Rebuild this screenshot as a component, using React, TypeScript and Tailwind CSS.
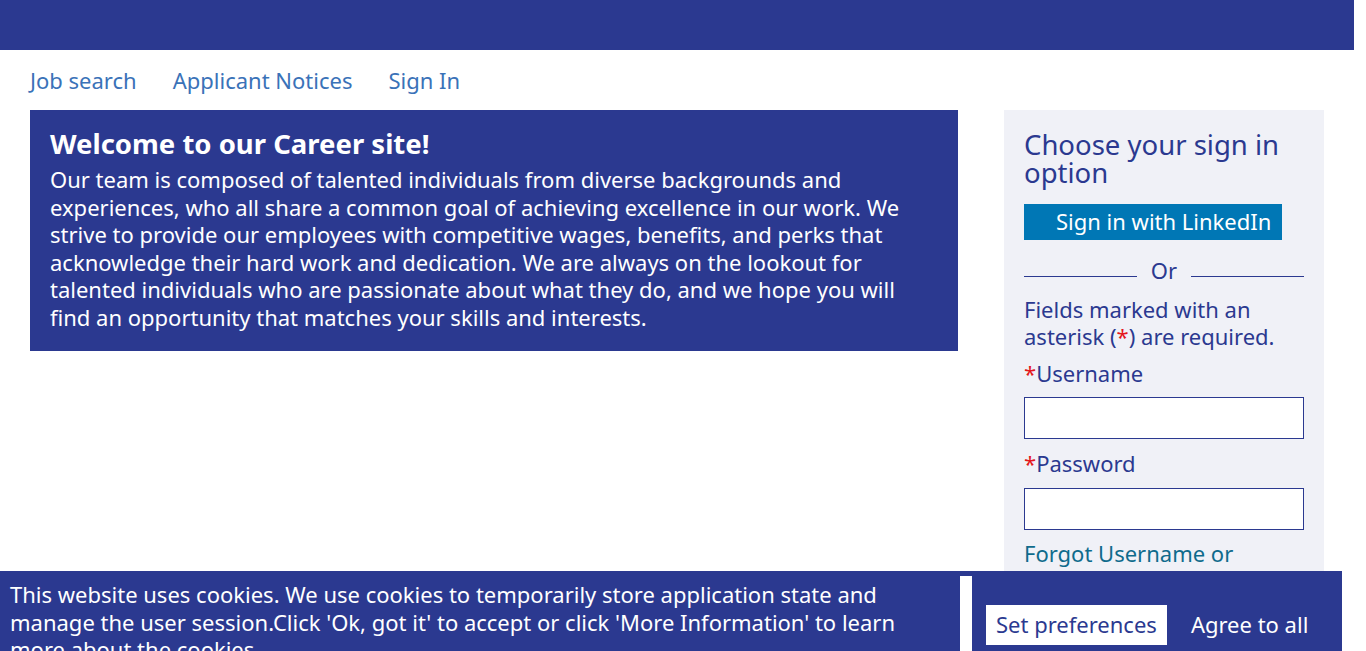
import React from 'react';

const NAV_LINKS = ['Job search', 'Applicant Notices', 'Sign In'];

const Asterisk = () => <span className="text-[#e4161c]">*</span>;

const App: React.FC = () => {
  return (
    <div className="w-[1354px] min-h-[651px] bg-white font-['Noto_Sans',sans-serif] text-[22px] leading-[27.5px]">
      {/* Top bar */}
      <header className="h-[50px] bg-[#2b3990]" />

      {/* Nav */}
      <nav className="h-[60px] px-[30px] flex items-center gap-[36px] text-[#3a72b8]">
        {NAV_LINKS.map(link => (
          <a key={link} href="#" className="leading-[27.5px] pt-[2px]">{link}</a>
        ))}
      </nav>

      <main className="px-[30px] flex items-start justify-between">
        {/* Welcome */}
        <section className="w-[928px] bg-[#2b3990] text-white px-[20px] pt-[20px] pb-[20px]">
          <h1 className="text-[27.5px] font-bold leading-[28px] mb-[8px]">Welcome to our Career site!</h1>
          <p>
            Our team is composed of talented individuals from diverse backgrounds and experiences, who all share a
            common goal of achieving excellence in our work. We strive to provide our employees with competitive
            wages, benefits, and perks that acknowledge their hard work and dedication. We are always on the lookout
            for talented individuals who are passionate about what they do, and we hope you will find an opportunity
            that matches your skills and interests.
          </p>
        </section>

        {/* Sign in panel */}
        <aside className="w-[320px] bg-[#f0f1f7] px-[20px] pt-[21px] pb-[40px] text-[#2b3990]">
          <h2 className="text-[27.5px] leading-[28px]">Choose your sign in option</h2>
          <button className="mt-[17px] h-[36px] bg-[#0077b5] text-white pl-[32px] pr-[11px] leading-[27.5px]">
            Sign in with LinkedIn
          </button>
          <div className="mt-[17px] flex items-center gap-[14px]">
            <div className="flex-1 h-px bg-[#2b3990] mt-[12px]" />
            <span>Or</span>
            <div className="flex-1 h-px bg-[#2b3990] mt-[12px]" />
          </div>
          <p className="mt-[11px]">
            Fields marked with an asterisk (<Asterisk />) are required.
          </p>
          <label className="block mt-[9px]">
            <Asterisk />Username
          </label>
          <input className="block mt-[10px] w-full h-[42px] bg-white border border-[#2b3990] outline-none" />
          <label className="block mt-[11px]">
            <Asterisk />Password
          </label>
          <input type="password" className="block mt-[10px] w-full h-[42px] bg-white border border-[#2b3990] outline-none" />
          <a href="#" className="block mt-[10px] text-[#0f6b8c]">Forgot Username or Password?</a>
        </aside>
      </main>

      {/* Cookie banner */}
      <div className="fixed left-0 top-[571px] w-[1342px] h-[120px] bg-[#2b3990] flex text-white">
        <div className="w-[960px] px-[10px] pt-[10px]">
          This website uses cookies. We use cookies to temporarily store application state and manage the user
          session.Click 'Ok, got it' to accept or click 'More Information' to learn more about the cookies.
        </div>
        <div className="w-[12px] mt-[5px] bg-white" />
        <div className="flex-1 pl-[14px] pt-[34px] flex items-start gap-[9px]">
          <button className="h-[40px] px-[10px] bg-white text-[#2b3990] leading-[27.5px]">Set preferences</button>
          <button className="h-[40px] px-[15px] text-white leading-[27.5px]">Agree to all</button>
        </div>
      </div>
    </div>
  );
};

export default App;
